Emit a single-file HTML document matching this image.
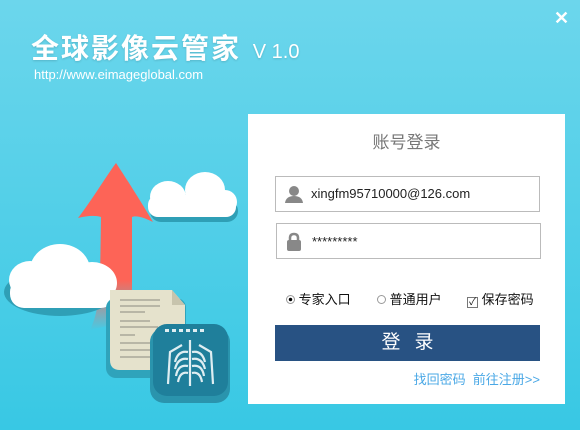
<!DOCTYPE html>
<html><head><meta charset="utf-8"><style>
*{margin:0;padding:0;box-sizing:border-box}
body{width:580px;height:430px;overflow:hidden;position:relative;background:linear-gradient(#6cd6ec,#38c8e4);font-family:"Liberation Sans","Noto Sans CJK SC",sans-serif}
.t{position:absolute;left:31px;top:27px;color:#fff;font-size:28px;font-weight:bold;letter-spacing:2px;text-shadow:0 1px 2px rgba(0,0,0,.15);white-space:nowrap}
.t small{font-size:20px;font-weight:normal;letter-spacing:0;margin-left:2px}
.u{position:absolute;left:34px;top:67px;color:#fff;font-size:13px}
.x{position:absolute;left:554px;top:8px;color:#fff;font-size:18px;font-weight:bold}
.p{position:absolute;left:248px;top:114px;width:317px;height:290px;background:#fff}
.h{position:absolute;left:0;width:100%;top:14px;text-align:center;color:#777;font-size:17px}
.in{position:absolute;border:1px solid #bbb;height:36px;width:265px}
.in span{position:absolute;left:35px;top:9px;font-size:13px;color:#222}
.r{position:absolute;top:175px;font-size:13px;color:#111}
.b{position:absolute;left:27px;top:211px;width:265px;height:36px;background:#285283;color:#fff;text-align:center;font-size:19px;line-height:36px;letter-spacing:14px;padding-left:14px}
.l{position:absolute;right:25px;top:255px;color:#4aa8e6;font-size:13px}
</style></head><body>
<div class="t">全球影像云管家 <small>V 1.0</small></div>
<div class="u">http://www.eimageglobal.com</div>
<div class="x">✕</div>
<svg style="position:absolute;left:0;top:0" width="250" height="430">
<defs><linearGradient id="ar" x1="0" y1="0" x2="0" y2="1"><stop offset="0" stop-color="#fd6457"/><stop offset=".7" stop-color="#fd6457"/><stop offset="1" stop-color="#fd6457" stop-opacity="0"/></linearGradient></defs>
<path d="M116 163 C124 175 140 200 153 222 C145 218 137 215 132 217 L132 320 L90 330 C100 310 100 290 101 217 C95 215 86 216 78 218 C92 200 105 178 116 163Z" fill="url(#ar)"/>
<g fill="#2f9fb6"><ellipse cx="60" cy="292" rx="56" ry="24"/><rect x="150" y="200" width="88" height="22" rx="11"/></g>
<g fill="#fff">
<ellipse cx="30" cy="280" rx="21" ry="19"/><ellipse cx="60" cy="270" rx="30" ry="26"/><ellipse cx="92" cy="283" rx="25" ry="21"/><rect x="10" y="278" width="105" height="30" rx="14"/>
<ellipse cx="168" cy="197" rx="18" ry="16"/><ellipse cx="205" cy="190" rx="20" ry="18"/><ellipse cx="225" cy="202" rx="12" ry="12"/><rect x="148" y="195" width="88" height="22" rx="10"/>
</g>
<rect x="106" y="298" width="80" height="80" rx="10" fill="#2fa3bb"/>
<path d="M110 290 L172 290 L185 305 L185 360 Q185 370 175 370 L120 370 Q110 370 110 360Z" fill="#e5e2cc"/>
<path d="M172 290 L185 305 L172 305Z" fill="#c7c4ad"/>
<g stroke="#a9a89a" stroke-width="1.5"><line x1="120" y1="300" x2="160" y2="300"/><line x1="120" y1="306" x2="160" y2="306"/><line x1="120" y1="312" x2="145" y2="312"/><line x1="120" y1="321" x2="150" y2="321"/><line x1="120" y1="327" x2="158" y2="327"/><line x1="120" y1="335" x2="135" y2="335"/><line x1="120" y1="343" x2="150" y2="343"/><line x1="120" y1="350" x2="150" y2="350"/><line x1="120" y1="357" x2="150" y2="357"/></g>
<rect x="150" y="328" width="80" height="75" rx="14" fill="#2a94ad"/>
<rect x="153" y="324" width="75" height="72" rx="14" fill="#1f7f9b"/>
<g fill="#dfeef2"><rect x="165" y="329" width="4" height="3"/><rect x="172" y="329" width="4" height="3"/><rect x="179" y="329" width="4" height="3"/><rect x="186" y="329" width="4" height="3"/><rect x="193" y="329" width="4" height="3"/><rect x="200" y="329" width="4" height="3"/></g>
<g stroke="#dfeef2" stroke-width="2.2" fill="none"><path d="M168 384 L170 352 L182 345"/><path d="M213 384 L211 352 L199 345"/><line x1="190" y1="340" x2="190" y2="386"/>
<path d="M188 352 Q178 350 175 362"/><path d="M188 359 Q178 357 175 369"/><path d="M188 366 Q178 364 176 376"/><path d="M188 373 Q180 371 178 382"/>
<path d="M192 352 Q202 350 205 362"/><path d="M192 359 Q202 357 205 369"/><path d="M192 366 Q202 364 204 376"/><path d="M192 373 Q200 371 202 382"/></g>
</svg>
<div class="p">
<div class="h">账号登录</div>
<div class="in" style="left:27px;top:62px"><svg style="position:absolute;left:9px;top:8px" width="18" height="18"><circle cx="9" cy="6" r="5" fill="#888"/><path d="M0 18 Q1 11 9 11 Q17 11 18 18Z" fill="#888"/></svg><span>xingfm95710000@126.com</span></div>
<div class="in" style="left:28px;top:109px"><svg style="position:absolute;left:9px;top:8px" width="16" height="20"><path d="M4 9 V6 Q4 2 8 2 Q12 2 12 6 V9" stroke="#888" stroke-width="2.5" fill="none"/><rect x="1" y="8" width="14" height="11" rx="2" fill="#888"/></svg><span style="top:10px">*********</span></div>
<div class="r" style="left:38px"><span style="display:inline-block;width:9px;height:9px;border:1px solid #999;border-radius:50%;position:relative;top:0px;background:radial-gradient(#000 30%,#fff 40%)"></span> 专家入口</div>
<div class="r" style="left:129px"><span style="display:inline-block;width:9px;height:9px;border:1px solid #999;border-radius:50%;position:relative;top:0px"></span> 普通用户</div>
<div class="r" style="left:219px"><span style="display:inline-block;width:11px;height:11px;border:1px solid #777;position:relative;top:1px;font-size:10px;line-height:9px;text-align:center">✓</span> 保存密码</div>
<div class="b">登录</div>
<div class="l">找回密码&nbsp;&nbsp;前往注册&gt;&gt;</div>
</div>
</body></html>
